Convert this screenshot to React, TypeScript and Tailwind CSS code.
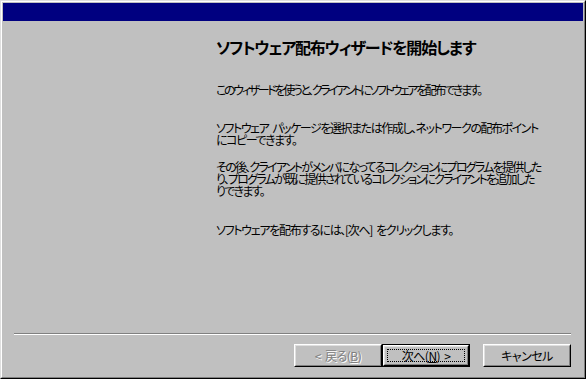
import React from "react";

const jp = "font-['Noto_Sans_CJK_JP',sans-serif]";
const body =
  "text-[12px] leading-[12px] whitespace-nowrap [font-feature-settings:'palt']";

function Sp() {
  return <span className="inline-block w-[4px]" />;
}

function Btn({
  children,
  isDefault,
  disabled,
}: {
  children: React.ReactNode;
  isDefault?: boolean;
  disabled?: boolean;
}) {
  const inner = (
    <div className="flex-1 flex border border-t-white border-l-white border-r-black border-b-black">
      <div className="flex-1 flex border border-t-[#dfdfdf] border-l-[#dfdfdf] border-r-[#808080] border-b-[#808080] p-[2px]">
        <div
          className={
            "flex-1 flex items-center justify-center border " +
            (isDefault ? "border-dotted border-black" : "border-transparent")
          }
        >
          <span
            className={
              "text-[12px] leading-[12px] whitespace-nowrap tracking-[-0.5px] [font-feature-settings:'palt'] " +
              (disabled ? "text-[#808080] [text-shadow:1px_1px_0_#ffffff]" : "text-black")
            }
          >
            {children}
          </span>
        </div>
      </div>
    </div>
  );
  return (
    <div
      className={
        "w-[88px] h-[23px] flex " + (isDefault ? "border border-black" : "")
      }
    >
      {inner}
    </div>
  );
}

export default function App() {
  return (
    <div
      className={
        "w-[586px] h-[379px] bg-[#c0c0c0] flex border border-t-[#dfdfdf] border-l-[#dfdfdf] border-r-black border-b-black " +
        jp
      }
    >
      <div className="flex-1 flex flex-col border border-t-white border-l-white border-r-[#808080] border-b-[#808080] p-px">
        <div className="h-[18px] bg-[#000080] shrink-0" />
        <div className="flex-1 flex flex-col pl-[213px] text-black">
          <div className="mt-[18px] text-[16px] leading-[16px] font-bold whitespace-nowrap tracking-[-1.2px] [font-feature-settings:'palt']">
            ソフトウェア配布ウィザードを開始します
          </div>
          <p className={"mt-[29px] tracking-[-2.35px] " + body}>
            このウィザードを使うと、クライアントにソフトウェアを配布できます。
          </p>
          <p className={"mt-[26px] tracking-[-1.45px] " + body}>
            ソフトウェア<Sp />パッケージを選択または作成し、ネットワークの配布ポイント
            <br />
            にコピーできます。
          </p>
          <p className={"mt-[15px] tracking-[-1.75px] " + body}>
            その後、クライアントがメンバになってるコレクションにプログラムを提供した
            <br />
            り、プログラムが既に提供されているコレクションにクライアントを追加した
            <br />
            りできます。
          </p>
          <p className={"mt-[27px] tracking-[-1.3px] " + body}>
            ソフトウェアを配布するには、[次へ]<Sp />をクリックします。
          </p>
        </div>
        <div className="ml-[11px] w-[557px] h-[2px] border-t border-t-[#808080] border-b border-b-white shrink-0" />
        <div className="flex mt-[9px] mb-[9px] pl-[291px]">
          <Btn disabled>
            &lt;<Sp />戻る(<span className="underline">B</span>)
          </Btn>
          <Btn isDefault>
            次へ(<span className="underline">N</span>)<Sp />&gt;
          </Btn>
          <div className="w-[13px]" />
          <Btn>キャンセル</Btn>
        </div>
      </div>
    </div>
  );
}
